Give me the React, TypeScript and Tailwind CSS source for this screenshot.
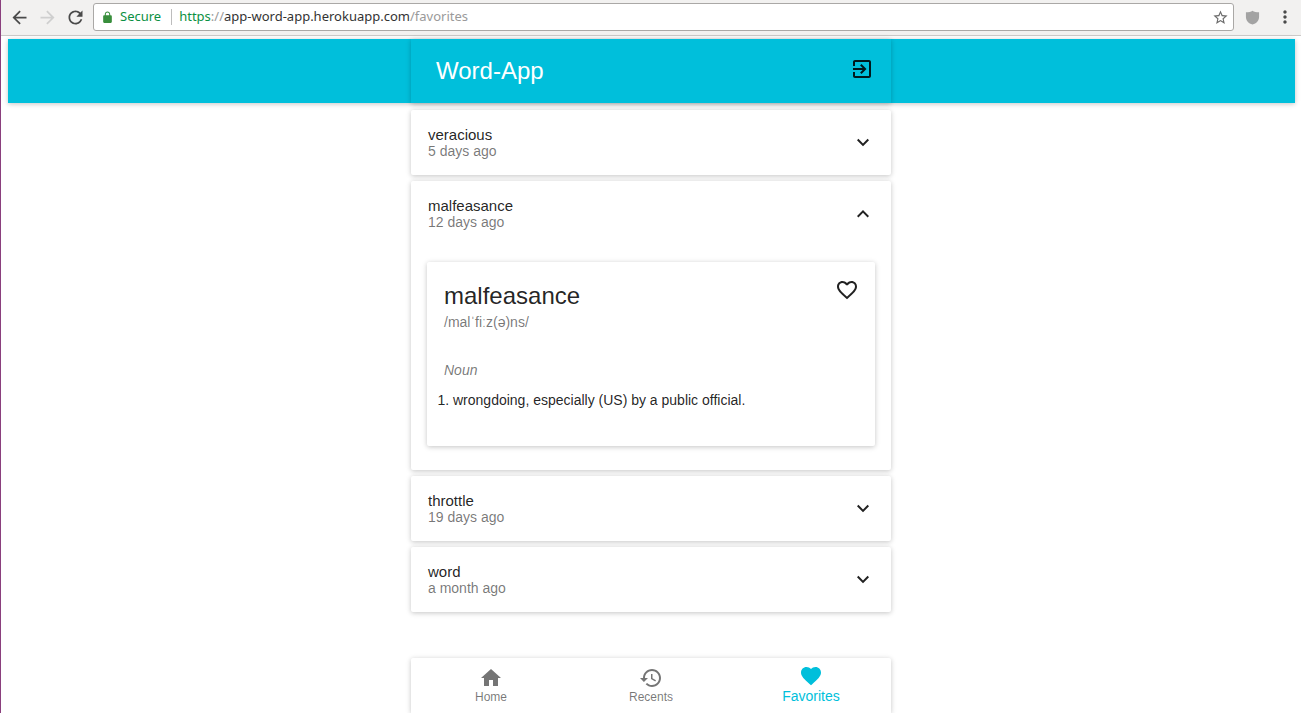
import { useState } from "react";

const paths = {
  back: "M20 11H7.83l5.59-5.59L12 4l-8 8 8 8 1.41-1.41L7.83 13H20v-2z",
  forward: "M12 4l-1.41 1.41L16.17 11H4v2h12.17l-5.58 5.59L12 20l8-8z",
  reload:
    "M17.65 6.35C16.2 4.9 14.21 4 12 4c-4.42 0-7.99 3.58-7.99 8s3.57 8 7.99 8c3.73 0 6.84-2.55 7.73-6h-2.08c-.82 2.33-3.04 4-5.65 4-3.31 0-6-2.69-6-6s2.69-6 6-6c1.66 0 3.14.69 4.22 1.78L13 11h7V4l-2.35 2.35z",
  lock: "M18 8h-1V6c0-2.76-2.24-5-5-5S7 3.24 7 6v2H6c-1.1 0-2 .9-2 2v10c0 1.1.9 2 2 2h12c1.1 0 2-.9 2-2V10c0-1.1-.9-2-2-2zM8.9 8V6c0-1.71 1.39-3.1 3.1-3.1s3.1 1.39 3.1 3.1v2H8.9z",
  star: "M22 9.24l-7.19-.62L12 2 9.19 8.63 2 9.24l5.46 4.73L5.82 21 12 17.27 18.18 21l-1.63-7.03L22 9.24zM12 15.4l-3.76 2.27 1-4.28-3.32-2.88 4.38-.38L12 6.1l1.71 4.04 4.38.38-3.32 2.88 1 4.28L12 15.4z",
  shield: "M12 1C9.5 3 6 3.6 1.5 3.6v7.4c0 6 4.200 10.300 10.500 12.200 6.300-1.900 10.500-6.200 10.500-12.200V3.600C18 3.600 14.500 3 12 1z",
  more: "M12 8c1.1 0 2-.9 2-2s-.9-2-2-2-2 .9-2 2 .9 2 2 2zm0 2c-1.1 0-2 .9-2 2s.9 2 2 2 2-.9 2-2-.9-2-2-2zm0 6c-1.1 0-2 .9-2 2s.9 2 2 2 2-.9 2-2-.9-2-2-2z",
  exit: "M10.09 15.59L11.5 17l5-5-5-5-1.41 1.41L12.67 11H3v2h9.67l-2.58 2.59zM19 3H5c-1.11 0-2 .9-2 2v4h2V5h14v14H5v-4H3v4c0 1.1.89 2 2 2h14c1.1 0 2-.9 2-2V5c0-1.1-.9-2-2-2z",
  down: "M7.41 7.84L12 12.42l4.59-4.58L18 9.25l-6 6-6-6z",
  up: "M7.41 15.41L12 10.83l4.59 4.58L18 14l-6-6-6 6z",
  heartOutline:
    "M16.5 3c-1.74 0-3.41.81-4.5 2.09C10.91 3.81 9.24 3 7.5 3 4.42 3 2 5.42 2 8.5c0 3.78 3.4 6.86 8.55 11.54L12 21.35l1.45-1.32C18.6 15.36 22 12.28 22 8.5 22 5.42 19.58 3 16.5 3zm-4.4 15.55l-.1.1-.1-.1C7.14 14.24 4 11.39 4 8.5 4 6.5 5.5 5 7.5 5c1.54 0 3.04.99 3.57 2.36h1.87C13.46 5.99 14.96 5 16.5 5c2 0 3.5 1.5 3.5 3.5 0 2.89-3.14 5.74-7.9 10.05z",
  heart:
    "M12 21.35l-1.45-1.32C5.4 15.36 2 12.28 2 8.5 2 5.42 4.42 3 7.5 3c1.74 0 3.41.81 4.5 2.09C13.09 3.81 14.76 3 16.5 3 19.58 3 22 5.42 22 8.5c0 3.78-3.4 6.86-8.55 11.54L12 21.35z",
  home: "M10 20v-6h4v6h5v-8h3L12 3 2 12h3v8z",
  history:
    "M13 3c-4.97 0-9 4.03-9 9H1l3.89 3.89.07.14L9 12H6c0-3.87 3.13-7 7-7s7 3.13 7 7-3.13 7-7 7c-1.93 0-3.68-.79-4.94-2.06l-1.42 1.42C8.27 19.99 10.51 21 13 21c4.97 0 9-4.03 9-9s-4.03-9-9-9zm-1 5v5l4.28 2.54.72-1.21-3.5-2.08V8H12z",
};

function Icon({ name, className }: { name: keyof typeof paths; className: string }) {
  return (
    <svg viewBox="0 0 24 24" fill="currentColor" aria-hidden="true" className={`shrink-0 ${className}`}>
      <path d={paths[name]} />
    </svg>
  );
}

const elevation = "shadow-[0_1px_6px_rgba(0,0,0,0.12),0_1px_4px_rgba(0,0,0,0.12)]";

function BrowserBar() {
  return (
    <div className="flex h-9 items-center border-b border-[#cccac8] bg-[#f2f1f0] pb-px pr-1.5 pl-2 font-['Noto_Sans',sans-serif]">
      <button aria-label="Back" className="flex w-7 text-[#4a4a4a]">
        <Icon name="back" className="size-[21px]" />
      </button>
      <button aria-label="Forward" disabled className="flex w-7 text-[#cfcfcf]">
        <Icon name="forward" className="size-[21px]" />
      </button>
      <button aria-label="Reload" className="flex w-7 text-[#4a4a4a]">
        <Icon name="reload" className="size-[21px]" />
      </button>
      <div className="flex h-7 flex-1 items-center rounded-[3px] border border-[#aaa8a6] bg-white pr-1 pl-[7px] text-[13px]">
        <Icon name="lock" className="size-[13px] text-[#388e3c]" />
        <span className="ml-1.5 text-[#0b9043]">Secure</span>
        <span className="mr-[7px] ml-2.5 h-4 w-px bg-[#bdbdbd]" />
        <span className="flex-1 whitespace-nowrap text-[#9a9a9a]">
          <span className="text-[#0b9043]">https</span>://
          <span className="text-[#333333]">app-word-app.herokuapp.com</span>/favorites
        </span>
        <button aria-label="Bookmark this page" className="text-[#6b6b6b]">
          <Icon name="star" className="size-[17px]" />
        </button>
      </div>
      <button aria-label="Extension" className="ml-[11px] text-[#a3a3a3]">
        <Icon name="shield" className="size-[15px]" />
      </button>
      <button aria-label="Menu" className="ml-[15px] text-[#4a4a4a]">
        <Icon name="more" className="size-5" />
      </button>
    </div>
  );
}

function Definition() {
  return (
    <div className="px-4 pt-4 pb-6">
      <article className={`rounded-xs bg-white pb-[38px] ${elevation}`}>
        <div className="flex items-start justify-between p-4 pl-[17px]">
          <div>
            <h2 className="text-2xl leading-9">malfeasance</h2>
            <p className="text-sm leading-4 text-black/54">/malˈfiːz(ə)ns/</p>
          </div>
          <button aria-label="Toggle favorite">
            <Icon name="heartOutline" className="size-6" />
          </button>
        </div>
        <p className="pt-4 pr-4 pl-[17px] text-sm leading-4 text-black/54 italic">Noun</p>
        <ol className="mt-3.5 list-decimal pr-4 pl-[26px] text-sm leading-4">
          <li>wrongdoing, especially (US) by a public official.</li>
        </ol>
      </article>
    </div>
  );
}

const words = [
  { word: "veracious", age: "5 days ago" },
  { word: "malfeasance", age: "12 days ago" },
  { word: "throttle", age: "19 days ago" },
  { word: "word", age: "a month ago" },
];

export default function App() {
  const [open, setOpen] = useState("malfeasance");
  return (
    <div className="flex min-h-screen flex-col border-l border-[#8a3f7d] bg-white font-['Liberation_Sans',Arial,sans-serif] text-black/87">
      <BrowserBar />
      <header className={`mt-[3px] mr-1.5 ml-[7px] bg-[#00bfdb] pr-px ${elevation}`}>
        <div className={`mx-auto flex h-16 max-w-[480px] items-center justify-between bg-[#00bfdb] pr-[17px] pl-[25px] ${elevation}`}>
          <h1 className="text-2xl text-white">Word-App</h1>
          <button aria-label="Sign out" className="pb-1">
            <Icon name="exit" className="size-6" />
          </button>
        </div>
      </header>
      <main className="mx-[7px] mt-[7px]">
        <div className="mx-auto flex max-w-[480px] flex-col gap-1.5">
          {words.map(({ word, age }) => (
            <section key={word} className={`rounded-xs bg-white ${elevation}`}>
              <button
                aria-expanded={open === word}
                onClick={() => setOpen(open === word ? "" : word)}
                className="flex w-full items-center justify-between p-4 pl-[17px] text-left"
              >
                <span>
                  <span className="block text-[15px] leading-[17px]">{word}</span>
                  <span className="block text-sm leading-4 text-black/54">{age}</span>
                </span>
                <Icon name={open === word ? "up" : "down"} className="size-6" />
              </button>
              {open === word && word === "malfeasance" && <Definition />}
            </section>
          ))}
        </div>
      </main>
      <footer className="mx-[7px] mt-auto">
        <nav className={`mx-auto grid h-[55px] max-w-[480px] grid-cols-3 rounded-t-xs bg-white text-xs leading-[14px] text-black/54 ${elevation}`}>
          <a href="#home" className="flex flex-col items-center pt-2">
            <Icon name="home" className="size-6" />
            Home
          </a>
          <a href="#recents" className="flex flex-col items-center pt-2">
            <Icon name="history" className="size-6" />
            Recents
          </a>
          <a href="#favorites" aria-current="page" className="flex flex-col items-center pt-1.5 text-sm leading-4 text-[#00bfdb]">
            <Icon name="heart" className="size-6" />
            Favorites
          </a>
        </nav>
      </footer>
    </div>
  );
}
